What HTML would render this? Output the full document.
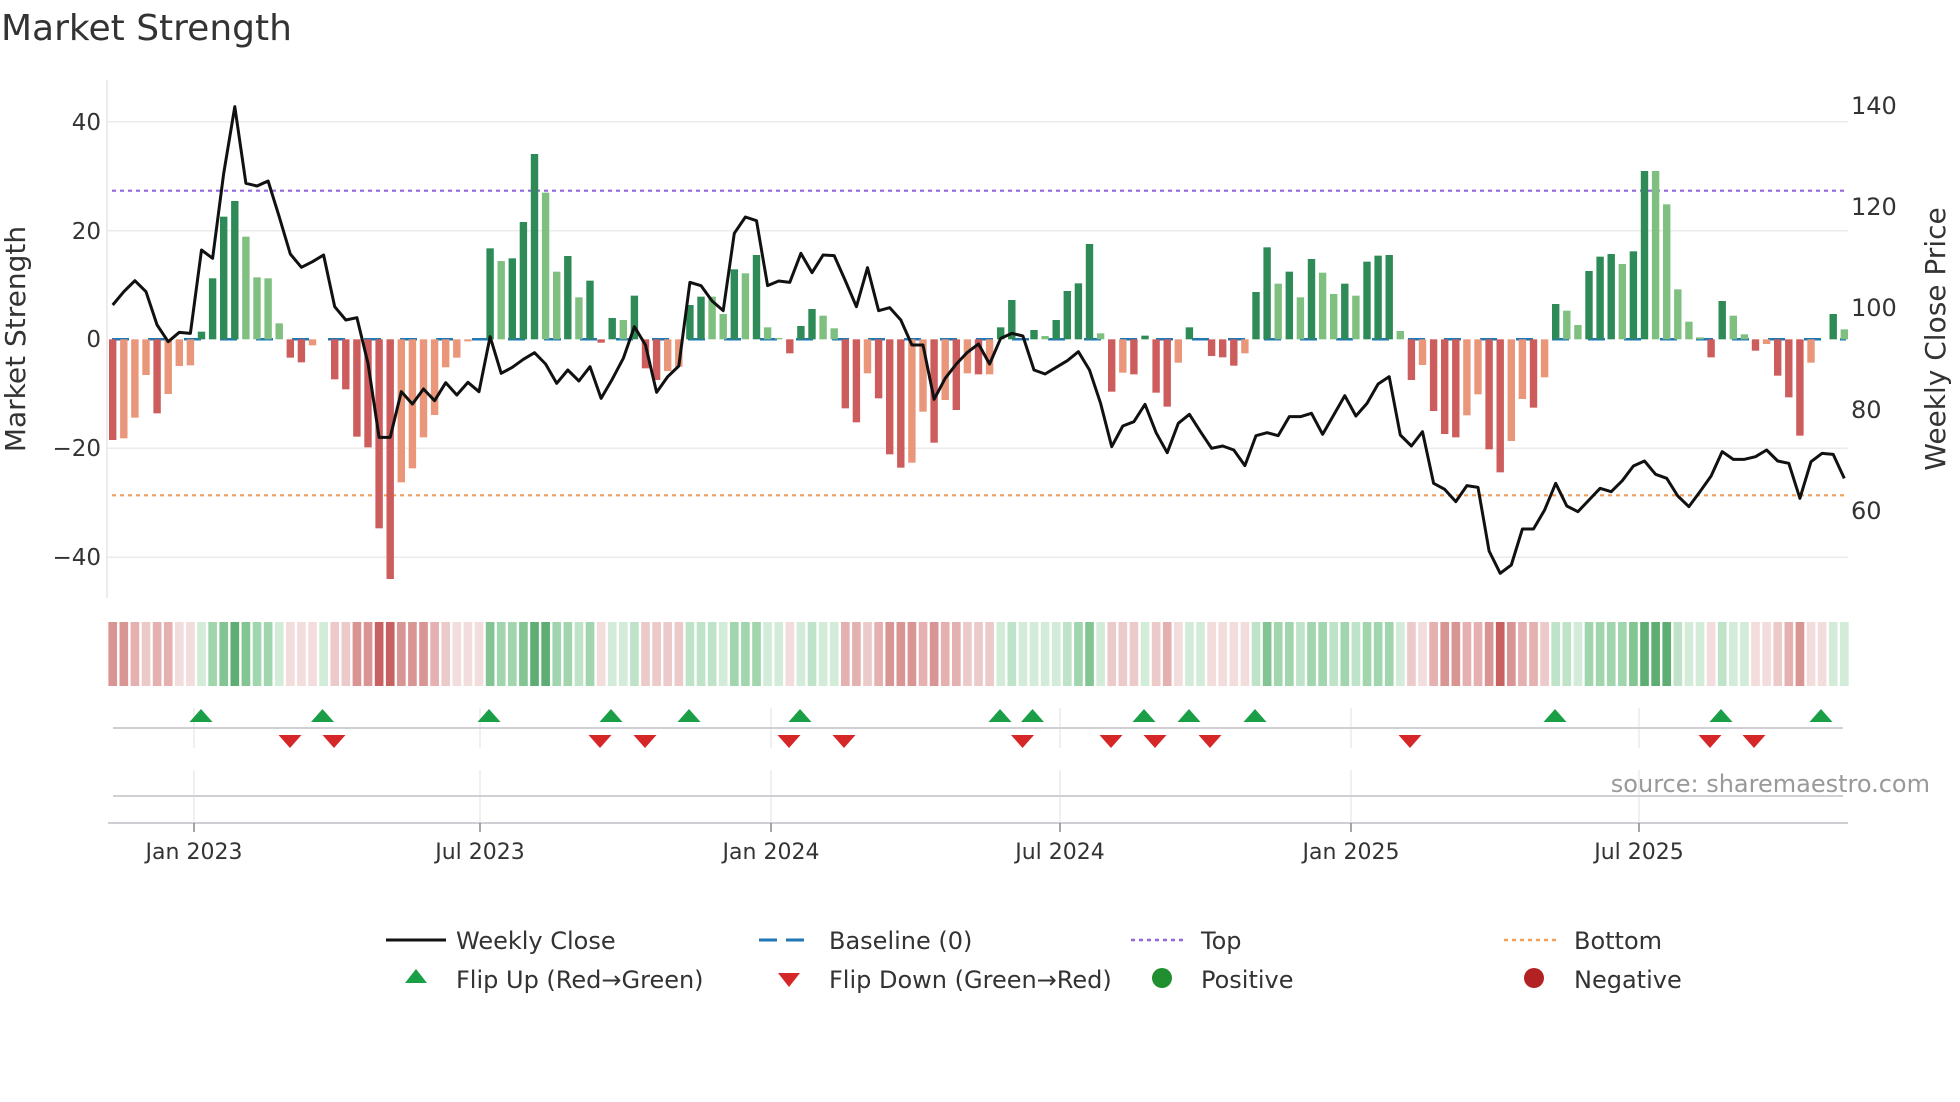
<!DOCTYPE html>
<html><head><meta charset="utf-8">
<style>
html,body{margin:0;padding:0;background:#fff;}
svg{display:block;font-family:"DejaVu Sans","Liberation Sans",sans-serif;}
.D{fill:#cd5c5c}.L{fill:#e9967a}.G{fill:#2e8b57}.g{fill:#7fbf7f}
.n1{fill:#f3dcdc}.n2{fill:#eccaca}.n3{fill:#e4b0b0}.n4{fill:#d99494}.n5{fill:#c86262}
.p1{fill:#d3ecd9}.p2{fill:#bfe3c8}.p3{fill:#a1d5ad}.p4{fill:#82c592}.p5{fill:#5eae74}
</style></head>
<body>
<svg width="1960" height="1102" viewBox="0 0 1960 1102" xmlns="http://www.w3.org/2000/svg" xmlns:xlink="http://www.w3.org/1999/xlink">
<defs>
<polygon id="up" points="0,709 -11.5,722 11.5,722" fill="#1a9e46"/>
<polygon id="dn" points="-11.5,735 11.5,735 0,748" fill="#d62728"/>
</defs>
<rect width="1960" height="1102" fill="#fff"/>
<text x="1" y="40" font-size="36" fill="#333">Market Strength</text>
<g stroke="#ebebeb" stroke-width="1.5">
<line x1="108" y1="121.7" x2="1848" y2="121.7"/>
<line x1="108" y1="230.7" x2="1848" y2="230.7"/>
<line x1="108" y1="448.3" x2="1848" y2="448.3"/>
<line x1="108" y1="557.3" x2="1848" y2="557.3"/>
</g>
<line x1="107" y1="80" x2="107" y2="598" stroke="#e6e6e6" stroke-width="1.5"/>
<g font-size="23" fill="#333" text-anchor="end">
<text x="101" y="130">40</text>
<text x="101" y="239">20</text>
<text x="101" y="347">0</text>
<text x="101" y="456">−20</text>
<text x="101" y="565">−40</text>
</g>
<g font-size="24" fill="#333">
<text x="1851" y="114">140</text>
<text x="1851" y="215">120</text>
<text x="1851" y="316">100</text>
<text x="1851" y="418">80</text>
<text x="1851" y="519">60</text>
</g>
<text transform="translate(25,339) rotate(-90)" font-size="28" fill="#333" text-anchor="middle">Market Strength</text>
<text transform="translate(1945,339) rotate(-90)" font-size="28" fill="#333" text-anchor="middle">Weekly Close Price</text>
<line x1="112" y1="339.3" x2="1846" y2="339.3" stroke="#1f77b4" stroke-width="2.5" stroke-dasharray="17,19"/>
<line x1="112" y1="190.7" x2="1846" y2="190.7" stroke="#9467d8" stroke-width="2.2" stroke-dasharray="4,4"/>
<line x1="112" y1="495.3" x2="1846" y2="495.3" stroke="#f0a05a" stroke-width="2.2" stroke-dasharray="4,4"/>
<g transform="translate(109,90) scale(11.1,0.333333)">
<rect class="D" x="0" y="748" width="0.667" height="302"/>
<rect class="L" x="1" y="748" width="0.667" height="297"/>
<rect class="L" x="2" y="748" width="0.667" height="235"/>
<rect class="L" x="3" y="748" width="0.667" height="107"/>
<rect class="D" x="4" y="748" width="0.667" height="222"/>
<rect class="L" x="5" y="748" width="0.667" height="164"/>
<rect class="L" x="6" y="748" width="0.667" height="80"/>
<rect class="L" x="7" y="748" width="0.667" height="78"/>
<rect class="G" x="8" y="725" width="0.667" height="23"/>
<rect class="G" x="9" y="565" width="0.667" height="183"/>
<rect class="G" x="10" y="380" width="0.667" height="368"/>
<rect class="G" x="11" y="333" width="0.667" height="415"/>
<rect class="g" x="12" y="440" width="0.667" height="308"/>
<rect class="g" x="13" y="562" width="0.667" height="186"/>
<rect class="g" x="14" y="565" width="0.667" height="183"/>
<rect class="g" x="15" y="700" width="0.667" height="48"/>
<rect class="D" x="16" y="748" width="0.667" height="55"/>
<rect class="D" x="17" y="748" width="0.667" height="69"/>
<rect class="L" x="18" y="748" width="0.667" height="18"/>
<rect class="D" x="20" y="748" width="0.667" height="120"/>
<rect class="D" x="21" y="748" width="0.667" height="150"/>
<rect class="D" x="22" y="748" width="0.667" height="292"/>
<rect class="D" x="23" y="748" width="0.667" height="324"/>
<rect class="D" x="24" y="748" width="0.667" height="567"/>
<rect class="D" x="25" y="748" width="0.667" height="719"/>
<rect class="L" x="26" y="748" width="0.667" height="429"/>
<rect class="L" x="27" y="748" width="0.667" height="387"/>
<rect class="L" x="28" y="748" width="0.667" height="294"/>
<rect class="L" x="29" y="748" width="0.667" height="227"/>
<rect class="L" x="30" y="748" width="0.667" height="84"/>
<rect class="L" x="31" y="748" width="0.667" height="55"/>
<rect class="L" x="32" y="748" width="0.667" height="6"/>
<rect class="G" x="34" y="475" width="0.667" height="273"/>
<rect class="g" x="35" y="513" width="0.667" height="235"/>
<rect class="G" x="36" y="505" width="0.667" height="243"/>
<rect class="G" x="37" y="396" width="0.667" height="352"/>
<rect class="G" x="38" y="192" width="0.667" height="556"/>
<rect class="g" x="39" y="308" width="0.667" height="440"/>
<rect class="g" x="40" y="545" width="0.667" height="203"/>
<rect class="G" x="41" y="498" width="0.667" height="250"/>
<rect class="g" x="42" y="622" width="0.667" height="126"/>
<rect class="G" x="43" y="572" width="0.667" height="176"/>
<rect class="D" x="44" y="748" width="0.667" height="10"/>
<rect class="G" x="45" y="684" width="0.667" height="64"/>
<rect class="g" x="46" y="690" width="0.667" height="58"/>
<rect class="G" x="47" y="617" width="0.667" height="131"/>
<rect class="D" x="48" y="748" width="0.667" height="87"/>
<rect class="D" x="49" y="748" width="0.667" height="122"/>
<rect class="L" x="50" y="748" width="0.667" height="95"/>
<rect class="L" x="51" y="748" width="0.667" height="82"/>
<rect class="G" x="52" y="645" width="0.667" height="103"/>
<rect class="G" x="53" y="620" width="0.667" height="128"/>
<rect class="g" x="54" y="620" width="0.667" height="128"/>
<rect class="g" x="55" y="672" width="0.667" height="76"/>
<rect class="G" x="56" y="538" width="0.667" height="210"/>
<rect class="g" x="57" y="550" width="0.667" height="198"/>
<rect class="G" x="58" y="495" width="0.667" height="253"/>
<rect class="g" x="59" y="712" width="0.667" height="36"/>
<rect class="g" x="60" y="744" width="0.667" height="4"/>
<rect class="D" x="61" y="748" width="0.667" height="42"/>
<rect class="G" x="62" y="708" width="0.667" height="40"/>
<rect class="G" x="63" y="657" width="0.667" height="91"/>
<rect class="g" x="64" y="677" width="0.667" height="71"/>
<rect class="g" x="65" y="715" width="0.667" height="33"/>
<rect class="D" x="66" y="748" width="0.667" height="207"/>
<rect class="D" x="67" y="748" width="0.667" height="249"/>
<rect class="L" x="68" y="748" width="0.667" height="102"/>
<rect class="D" x="69" y="748" width="0.667" height="177"/>
<rect class="D" x="70" y="748" width="0.667" height="345"/>
<rect class="D" x="71" y="748" width="0.667" height="385"/>
<rect class="L" x="72" y="748" width="0.667" height="370"/>
<rect class="L" x="73" y="748" width="0.667" height="217"/>
<rect class="D" x="74" y="748" width="0.667" height="310"/>
<rect class="L" x="75" y="748" width="0.667" height="182"/>
<rect class="D" x="76" y="748" width="0.667" height="212"/>
<rect class="L" x="77" y="748" width="0.667" height="102"/>
<rect class="D" x="78" y="748" width="0.667" height="105"/>
<rect class="L" x="79" y="748" width="0.667" height="105"/>
<rect class="G" x="80" y="712" width="0.667" height="36"/>
<rect class="G" x="81" y="630" width="0.667" height="118"/>
<rect class="G" x="83" y="720" width="0.667" height="28"/>
<rect class="g" x="84" y="738" width="0.667" height="10"/>
<rect class="G" x="85" y="690" width="0.667" height="58"/>
<rect class="G" x="86" y="603" width="0.667" height="145"/>
<rect class="G" x="87" y="580" width="0.667" height="168"/>
<rect class="G" x="88" y="462" width="0.667" height="286"/>
<rect class="g" x="89" y="730" width="0.667" height="18"/>
<rect class="D" x="90" y="748" width="0.667" height="157"/>
<rect class="L" x="91" y="748" width="0.667" height="100"/>
<rect class="D" x="92" y="748" width="0.667" height="105"/>
<rect class="G" x="93" y="737" width="0.667" height="11"/>
<rect class="D" x="94" y="748" width="0.667" height="160"/>
<rect class="D" x="95" y="748" width="0.667" height="202"/>
<rect class="L" x="96" y="748" width="0.667" height="70"/>
<rect class="G" x="97" y="712" width="0.667" height="36"/>
<rect class="D" x="99" y="748" width="0.667" height="50"/>
<rect class="D" x="100" y="748" width="0.667" height="54"/>
<rect class="D" x="101" y="748" width="0.667" height="79"/>
<rect class="L" x="102" y="748" width="0.667" height="42"/>
<rect class="G" x="103" y="606" width="0.667" height="142"/>
<rect class="G" x="104" y="472" width="0.667" height="276"/>
<rect class="g" x="105" y="581" width="0.667" height="167"/>
<rect class="G" x="106" y="545" width="0.667" height="203"/>
<rect class="g" x="107" y="622" width="0.667" height="126"/>
<rect class="G" x="108" y="507" width="0.667" height="241"/>
<rect class="g" x="109" y="548" width="0.667" height="200"/>
<rect class="g" x="110" y="612" width="0.667" height="136"/>
<rect class="G" x="111" y="581" width="0.667" height="167"/>
<rect class="g" x="112" y="617" width="0.667" height="131"/>
<rect class="G" x="113" y="515" width="0.667" height="233"/>
<rect class="G" x="114" y="497" width="0.667" height="251"/>
<rect class="G" x="115" y="495" width="0.667" height="253"/>
<rect class="g" x="116" y="723" width="0.667" height="25"/>
<rect class="D" x="117" y="748" width="0.667" height="122"/>
<rect class="L" x="118" y="748" width="0.667" height="77"/>
<rect class="D" x="119" y="748" width="0.667" height="215"/>
<rect class="D" x="120" y="748" width="0.667" height="284"/>
<rect class="D" x="121" y="748" width="0.667" height="294"/>
<rect class="L" x="122" y="748" width="0.667" height="228"/>
<rect class="L" x="123" y="748" width="0.667" height="165"/>
<rect class="D" x="124" y="748" width="0.667" height="330"/>
<rect class="D" x="125" y="748" width="0.667" height="399"/>
<rect class="L" x="126" y="748" width="0.667" height="305"/>
<rect class="L" x="127" y="748" width="0.667" height="179"/>
<rect class="D" x="128" y="748" width="0.667" height="205"/>
<rect class="L" x="129" y="748" width="0.667" height="114"/>
<rect class="G" x="130" y="642" width="0.667" height="106"/>
<rect class="g" x="131" y="662" width="0.667" height="86"/>
<rect class="g" x="132" y="705" width="0.667" height="43"/>
<rect class="G" x="133" y="543" width="0.667" height="205"/>
<rect class="G" x="134" y="500" width="0.667" height="248"/>
<rect class="G" x="135" y="492" width="0.667" height="256"/>
<rect class="g" x="136" y="522" width="0.667" height="226"/>
<rect class="G" x="137" y="484" width="0.667" height="264"/>
<rect class="G" x="138" y="243" width="0.667" height="505"/>
<rect class="g" x="139" y="243" width="0.667" height="505"/>
<rect class="g" x="140" y="343" width="0.667" height="405"/>
<rect class="g" x="141" y="598" width="0.667" height="150"/>
<rect class="g" x="142" y="695" width="0.667" height="53"/>
<rect class="g" x="143" y="742" width="0.667" height="6"/>
<rect class="D" x="144" y="748" width="0.667" height="54"/>
<rect class="G" x="145" y="633" width="0.667" height="115"/>
<rect class="g" x="146" y="677" width="0.667" height="71"/>
<rect class="g" x="147" y="733" width="0.667" height="15"/>
<rect class="D" x="148" y="748" width="0.667" height="34"/>
<rect class="L" x="149" y="748" width="0.667" height="14"/>
<rect class="D" x="150" y="748" width="0.667" height="109"/>
<rect class="D" x="151" y="748" width="0.667" height="174"/>
<rect class="D" x="152" y="748" width="0.667" height="289"/>
<rect class="L" x="153" y="748" width="0.667" height="70"/>
<rect class="G" x="155" y="672" width="0.667" height="76"/>
<rect class="g" x="156" y="718" width="0.667" height="30"/>
</g>
<g transform="translate(108.4,622) scale(11.1,1)">
<rect class="n4" x="0" width="0.78" height="64"/><rect class="n4" x="1" width="0.78" height="64"/><rect class="n3" x="2" width="0.78" height="64"/><rect class="n2" x="3" width="0.78" height="64"/><rect class="n3" x="4" width="0.78" height="64"/><rect class="n3" x="5" width="0.78" height="64"/><rect class="n1" x="6" width="0.78" height="64"/><rect class="n1" x="7" width="0.78" height="64"/><rect class="p1" x="8" width="0.78" height="64"/><rect class="p3" x="9" width="0.78" height="64"/>
<rect class="p4" x="10" width="0.78" height="64"/><rect class="p5" x="11" width="0.78" height="64"/><rect class="p4" x="12" width="0.78" height="64"/><rect class="p3" x="13" width="0.78" height="64"/><rect class="p3" x="14" width="0.78" height="64"/><rect class="p1" x="15" width="0.78" height="64"/><rect class="n1" x="16" width="0.78" height="64"/><rect class="n1" x="17" width="0.78" height="64"/><rect class="n1" x="18" width="0.78" height="64"/><rect class="p1" x="19" width="0.78" height="64"/>
<rect class="n2" x="20" width="0.78" height="64"/><rect class="n2" x="21" width="0.78" height="64"/><rect class="n4" x="22" width="0.78" height="64"/><rect class="n4" x="23" width="0.78" height="64"/><rect class="n5" x="24" width="0.78" height="64"/><rect class="n5" x="25" width="0.78" height="64"/><rect class="n4" x="26" width="0.78" height="64"/><rect class="n4" x="27" width="0.78" height="64"/><rect class="n4" x="28" width="0.78" height="64"/><rect class="n3" x="29" width="0.78" height="64"/>
<rect class="n2" x="30" width="0.78" height="64"/><rect class="n1" x="31" width="0.78" height="64"/><rect class="n1" x="32" width="0.78" height="64"/><rect class="n1" x="33" width="0.78" height="64"/><rect class="p4" x="34" width="0.78" height="64"/><rect class="p3" x="35" width="0.78" height="64"/><rect class="p3" x="36" width="0.78" height="64"/><rect class="p4" x="37" width="0.78" height="64"/><rect class="p5" x="38" width="0.78" height="64"/><rect class="p5" x="39" width="0.78" height="64"/>
<rect class="p3" x="40" width="0.78" height="64"/><rect class="p3" x="41" width="0.78" height="64"/><rect class="p2" x="42" width="0.78" height="64"/><rect class="p3" x="43" width="0.78" height="64"/><rect class="n1" x="44" width="0.78" height="64"/><rect class="p1" x="45" width="0.78" height="64"/><rect class="p1" x="46" width="0.78" height="64"/><rect class="p2" x="47" width="0.78" height="64"/><rect class="n2" x="48" width="0.78" height="64"/><rect class="n2" x="49" width="0.78" height="64"/>
<rect class="n2" x="50" width="0.78" height="64"/><rect class="n2" x="51" width="0.78" height="64"/><rect class="p2" x="52" width="0.78" height="64"/><rect class="p2" x="53" width="0.78" height="64"/><rect class="p2" x="54" width="0.78" height="64"/><rect class="p1" x="55" width="0.78" height="64"/><rect class="p3" x="56" width="0.78" height="64"/><rect class="p3" x="57" width="0.78" height="64"/><rect class="p3" x="58" width="0.78" height="64"/><rect class="p1" x="59" width="0.78" height="64"/>
<rect class="p1" x="60" width="0.78" height="64"/><rect class="n1" x="61" width="0.78" height="64"/><rect class="p1" x="62" width="0.78" height="64"/><rect class="p2" x="63" width="0.78" height="64"/><rect class="p1" x="64" width="0.78" height="64"/><rect class="p1" x="65" width="0.78" height="64"/><rect class="n3" x="66" width="0.78" height="64"/><rect class="n3" x="67" width="0.78" height="64"/><rect class="n2" x="68" width="0.78" height="64"/><rect class="n3" x="69" width="0.78" height="64"/>
<rect class="n4" x="70" width="0.78" height="64"/><rect class="n4" x="71" width="0.78" height="64"/><rect class="n4" x="72" width="0.78" height="64"/><rect class="n3" x="73" width="0.78" height="64"/><rect class="n4" x="74" width="0.78" height="64"/><rect class="n3" x="75" width="0.78" height="64"/><rect class="n3" x="76" width="0.78" height="64"/><rect class="n2" x="77" width="0.78" height="64"/><rect class="n2" x="78" width="0.78" height="64"/><rect class="n2" x="79" width="0.78" height="64"/>
<rect class="p1" x="80" width="0.78" height="64"/><rect class="p2" x="81" width="0.78" height="64"/><rect class="p1" x="82" width="0.78" height="64"/><rect class="p1" x="83" width="0.78" height="64"/><rect class="p1" x="84" width="0.78" height="64"/><rect class="p1" x="85" width="0.78" height="64"/><rect class="p2" x="86" width="0.78" height="64"/><rect class="p3" x="87" width="0.78" height="64"/><rect class="p4" x="88" width="0.78" height="64"/><rect class="p1" x="89" width="0.78" height="64"/>
<rect class="n2" x="90" width="0.78" height="64"/><rect class="n2" x="91" width="0.78" height="64"/><rect class="n2" x="92" width="0.78" height="64"/><rect class="p1" x="93" width="0.78" height="64"/><rect class="n2" x="94" width="0.78" height="64"/><rect class="n3" x="95" width="0.78" height="64"/><rect class="n1" x="96" width="0.78" height="64"/><rect class="p1" x="97" width="0.78" height="64"/><rect class="p1" x="98" width="0.78" height="64"/><rect class="n1" x="99" width="0.78" height="64"/>
<rect class="n1" x="100" width="0.78" height="64"/><rect class="n1" x="101" width="0.78" height="64"/><rect class="n1" x="102" width="0.78" height="64"/><rect class="p2" x="103" width="0.78" height="64"/><rect class="p4" x="104" width="0.78" height="64"/><rect class="p3" x="105" width="0.78" height="64"/><rect class="p3" x="106" width="0.78" height="64"/><rect class="p2" x="107" width="0.78" height="64"/><rect class="p3" x="108" width="0.78" height="64"/><rect class="p3" x="109" width="0.78" height="64"/>
<rect class="p2" x="110" width="0.78" height="64"/><rect class="p3" x="111" width="0.78" height="64"/><rect class="p2" x="112" width="0.78" height="64"/><rect class="p3" x="113" width="0.78" height="64"/><rect class="p3" x="114" width="0.78" height="64"/><rect class="p3" x="115" width="0.78" height="64"/><rect class="p1" x="116" width="0.78" height="64"/><rect class="n2" x="117" width="0.78" height="64"/><rect class="n1" x="118" width="0.78" height="64"/><rect class="n3" x="119" width="0.78" height="64"/>
<rect class="n4" x="120" width="0.78" height="64"/><rect class="n4" x="121" width="0.78" height="64"/><rect class="n3" x="122" width="0.78" height="64"/><rect class="n3" x="123" width="0.78" height="64"/><rect class="n4" x="124" width="0.78" height="64"/><rect class="n5" x="125" width="0.78" height="64"/><rect class="n4" x="126" width="0.78" height="64"/><rect class="n3" x="127" width="0.78" height="64"/><rect class="n3" x="128" width="0.78" height="64"/><rect class="n2" x="129" width="0.78" height="64"/>
<rect class="p2" x="130" width="0.78" height="64"/><rect class="p2" x="131" width="0.78" height="64"/><rect class="p1" x="132" width="0.78" height="64"/><rect class="p3" x="133" width="0.78" height="64"/><rect class="p3" x="134" width="0.78" height="64"/><rect class="p3" x="135" width="0.78" height="64"/><rect class="p3" x="136" width="0.78" height="64"/><rect class="p4" x="137" width="0.78" height="64"/><rect class="p5" x="138" width="0.78" height="64"/><rect class="p5" x="139" width="0.78" height="64"/>
<rect class="p5" x="140" width="0.78" height="64"/><rect class="p2" x="141" width="0.78" height="64"/><rect class="p1" x="142" width="0.78" height="64"/><rect class="p1" x="143" width="0.78" height="64"/><rect class="n1" x="144" width="0.78" height="64"/><rect class="p2" x="145" width="0.78" height="64"/><rect class="p1" x="146" width="0.78" height="64"/><rect class="p1" x="147" width="0.78" height="64"/><rect class="n1" x="148" width="0.78" height="64"/><rect class="n1" x="149" width="0.78" height="64"/>
<rect class="n2" x="150" width="0.78" height="64"/><rect class="n3" x="151" width="0.78" height="64"/><rect class="n4" x="152" width="0.78" height="64"/><rect class="n1" x="153" width="0.78" height="64"/><rect class="n1" x="154" width="0.78" height="64"/><rect class="p1" x="155" width="0.78" height="64"/><rect class="p1" x="156" width="0.78" height="64"/>
</g>
<g transform="translate(112.7,90) scale(11.1,0.333333)">
<polyline fill="none" stroke="#111" stroke-width="3" stroke-linejoin="round" vector-effect="non-scaling-stroke" points="0,645 1,605 2,572 3,605 4,705 5,755 6,727 7,730 8,480 9,505 10,250 11,50 12,280 13,288 14,273 15,380 16,492 17,532 18,515 19,495 20,650 21,690 22,683 23,820 24,1042 25,1042 26,905 27,942 28,897 29,932 30,878 31,915 32,877 33,905 34,740 35,850 36,832 37,808 38,788 39,822 40,880 41,840 42,873 43,830 44,925 45,868 46,805 47,710 48,765 49,907 50,860 51,828 52,577 53,587 54,633 55,662 56,430 57,381 58,392 59,587 60,573 61,577 62,490 63,548 64,495 65,497 66,572 67,650 68,533 69,662 70,653 71,690 72,765 73,765 74,928 75,865 76,822 77,787 78,762 79,822 80,745 81,730 82,738 83,840 84,852 85,832 86,812 87,785 88,840 89,940 90,1070 91,1008 92,995 93,943 94,1028 95,1088 96,1000 97,973 98,1025 99,1075 100,1068 101,1080 102,1127 103,1037 104,1028 105,1037 106,980 107,980 108,970 109,1033 110,975 111,917 112,978 113,940 114,882 115,860 116,1035 117,1068 118,1025 119,1180 120,1198 121,1235 122,1187 123,1192 124,1383 125,1450 126,1425 127,1317 128,1317 129,1260 130,1180 131,1248 132,1265 133,1230 134,1195 135,1205 136,1172 137,1128 138,1113 139,1153 140,1165 141,1218 142,1250 143,1205 144,1158 145,1085 146,1108 147,1108 148,1100 149,1080 150,1113 151,1120 152,1225 153,1115 154,1090 155,1093 156,1165"/>
</g>
<g stroke="#e4e6ea" stroke-width="1.2">
<line x1="194" y1="708" x2="194" y2="748"/><line x1="194" y1="770" x2="194" y2="823"/>
<line x1="480" y1="708" x2="480" y2="748"/><line x1="480" y1="770" x2="480" y2="823"/>
<line x1="771" y1="708" x2="771" y2="748"/><line x1="771" y1="770" x2="771" y2="823"/>
<line x1="1060" y1="708" x2="1060" y2="748"/><line x1="1060" y1="770" x2="1060" y2="823"/>
<line x1="1351" y1="708" x2="1351" y2="748"/><line x1="1351" y1="770" x2="1351" y2="823"/>
<line x1="1639" y1="708" x2="1639" y2="748"/><line x1="1639" y1="770" x2="1639" y2="823"/>
</g>
<line x1="113" y1="728" x2="1843" y2="728" stroke="#d0d0d4" stroke-width="2"/>
<line x1="113" y1="796" x2="1843" y2="796" stroke="#d0d0d4" stroke-width="2"/>
<line x1="108" y1="823" x2="1848" y2="823" stroke="#cfcfd3" stroke-width="2"/>
<use xlink:href="#up" x="201"/><use xlink:href="#up" x="322.5"/><use xlink:href="#up" x="489"/><use xlink:href="#up" x="611"/><use xlink:href="#up" x="689"/><use xlink:href="#up" x="800"/><use xlink:href="#up" x="1000"/><use xlink:href="#up" x="1032.5"/><use xlink:href="#up" x="1144"/><use xlink:href="#up" x="1189"/><use xlink:href="#up" x="1255"/><use xlink:href="#up" x="1555"/><use xlink:href="#up" x="1721"/><use xlink:href="#up" x="1821"/>
<use xlink:href="#dn" x="290"/><use xlink:href="#dn" x="334"/><use xlink:href="#dn" x="600"/><use xlink:href="#dn" x="645"/><use xlink:href="#dn" x="789"/><use xlink:href="#dn" x="844"/><use xlink:href="#dn" x="1022.5"/><use xlink:href="#dn" x="1111"/><use xlink:href="#dn" x="1155"/><use xlink:href="#dn" x="1210"/><use xlink:href="#dn" x="1410"/><use xlink:href="#dn" x="1710"/><use xlink:href="#dn" x="1754"/>
<g stroke="#888" stroke-width="1.5">
<line x1="194" y1="823" x2="194" y2="832"/><line x1="480" y1="823" x2="480" y2="832"/>
<line x1="771" y1="823" x2="771" y2="832"/><line x1="1060" y1="823" x2="1060" y2="832"/>
<line x1="1351" y1="823" x2="1351" y2="832"/><line x1="1639" y1="823" x2="1639" y2="832"/>
</g>
<g font-size="22" fill="#333" text-anchor="middle">
<text x="194" y="859">Jan 2023</text><text x="480" y="859">Jul 2023</text>
<text x="771" y="859">Jan 2024</text><text x="1060" y="859">Jul 2024</text>
<text x="1351" y="859">Jan 2025</text><text x="1639" y="859">Jul 2025</text>
</g>
<text x="1930" y="792" font-size="24" fill="#999" text-anchor="end">source: sharemaestro.com</text>
<g font-size="24" fill="#333">
<line x1="386" y1="940" x2="446" y2="940" stroke="#111" stroke-width="3"/>
<text x="456" y="949">Weekly Close</text>
<line x1="759" y1="940" x2="777" y2="940" stroke="#1f77b4" stroke-width="3"/>
<line x1="786" y1="940" x2="804" y2="940" stroke="#1f77b4" stroke-width="3"/>
<text x="829" y="949">Baseline (0)</text>
<line x1="1131" y1="940" x2="1187" y2="940" stroke="#9467d8" stroke-width="2.5" stroke-dasharray="4,4"/>
<text x="1201" y="949">Top</text>
<line x1="1504" y1="940" x2="1560" y2="940" stroke="#f0a05a" stroke-width="2.5" stroke-dasharray="4,4"/>
<text x="1574" y="949">Bottom</text>
<polygon points="416,969 405,983 427,983" fill="#1a9e46"/>
<text x="456" y="988">Flip Up (Red→Green)</text>
<polygon points="778,973 800,973 789,987" fill="#d62728"/>
<text x="829" y="988">Flip Down (Green→Red)</text>
<circle cx="1162" cy="978" r="10" fill="#1f8f2f"/>
<text x="1201" y="988">Positive</text>
<circle cx="1534" cy="978" r="10" fill="#b22222"/>
<text x="1574" y="988">Negative</text>
</g>
</svg>
</body></html>
